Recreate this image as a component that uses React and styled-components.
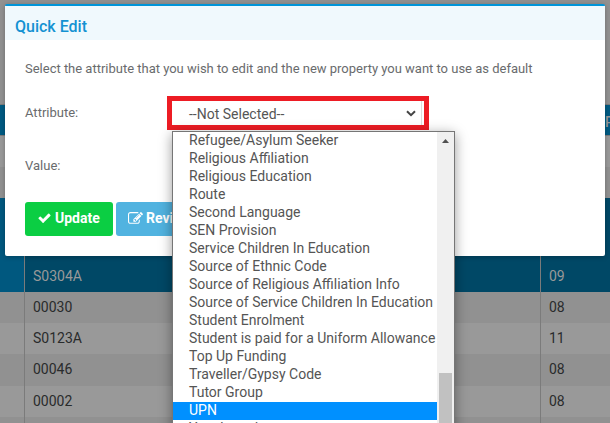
import React from "react";
import styled, { createGlobalStyle } from "styled-components";

const GlobalStyle = createGlobalStyle`
  * {
    box-sizing: border-box;
  }
  body {
    margin: 0;
    overflow: hidden;
    background: #919191;
    font-family: Roboto, "Liberation Sans", sans-serif;
  }
`;

const Page = styled.div`
  position: relative;
  width: 610px;
  height: 423px;
  overflow: hidden;
`;

const Table = styled.div`
  padding-top: 104px;
`;

const HeadRow = styled.div`
  height: 32px;
  display: flex;
  align-items: center;
  justify-content: flex-end;
  padding-top: 3px;
  background: #005a82;
  border-top: 1px solid #7b7b7b;
  border-bottom: 1px solid #7b7b7b;
  color: #999;
  font-size: 14px;
  font-weight: 500;
  span {
    width: 5px;
    white-space: nowrap;
  }
`;

const rowColors = {
  odd: "#999999",
  even: "#919191",
  selected: "#004866",
};

const Row = styled.div`
  display: grid;
  grid-template-columns: 25px 516px 1fr;
  height: ${(props) => props.$height}px;
  background: ${(props) => rowColors[props.$kind]};
  color: ${(props) => (props.$kind === "selected" ? "#999" : "#292b2c")};
  font-size: 14px;
`;

const Cell = styled.div`
  display: flex;
  align-items: center;
  padding: 0 0 2px 8px;
  background: ${(props) => (props.$sorted ? "#00587f" : "transparent")};
  border-right: ${(props) => (props.$last ? "0" : "1px solid #7b7b7b")};
`;

const Modal = styled.div`
  position: absolute;
  left: 5px;
  top: 4px;
  width: 600px;
  height: 252px;
  background: #fff;
  border-top: 2px solid #0095d9;
  border-radius: 2px;
  box-shadow: 0 1px 5px rgba(0, 0, 0, 0.25);
`;

const ModalHeader = styled.div`
  height: 34px;
  padding: 1px 10px 0;
  background: #f0f9fd;
  color: #1492d2;
  font-size: 16px;
  font-weight: 500;
  line-height: 40px;
`;

const ModalBody = styled.div`
  display: flex;
  flex-direction: column;
  padding: 19px 20px 0;
  color: #696b6d;
  font-size: 13px;
`;

const Text = styled.p`
  margin: 0 0 17px;
  line-height: 20px;
  letter-spacing: -0.01px;
  white-space: nowrap;
`;

const Field = styled.div`
  display: flex;
  align-items: flex-start;
  height: 53px;
`;

const Label = styled.label`
  width: 142px;
  padding-top: 7px;
  line-height: 20px;
`;

const Highlight = styled.div`
  width: 262px;
  height: 34px;
  border: 5px solid #ed1c24;
`;

const Select = styled.div`
  display: flex;
  align-items: center;
  justify-content: space-between;
  width: 250px;
  height: 24px;
  padding: 1px 5px 0 17px;
  border-right: 1px solid #ddd;
  color: #555;
  font-size: 14px;
`;

const Buttons = styled.div`
  display: flex;
  gap: 3px;
`;

const Button = styled.button`
  display: flex;
  align-items: center;
  gap: 3px;
  width: 88px;
  height: 34px;
  padding: 0 0 2px 12px;
  border: 0;
  border-radius: 3px;
  background: ${(props) => props.$color};
  color: #fff;
  font-family: inherit;
  font-size: 14px;
  font-weight: 700;
  svg {
    flex: none;
    fill: currentColor;
  }
`;

const Dropdown = styled.div`
  position: absolute;
  left: 172px;
  top: 131px;
  display: flex;
  width: 283px;
  height: 310px;
  background: #fff;
  border: 1px solid #767676;
  box-shadow: 0 3px 12px rgba(0, 0, 0, 0.4);
`;

const Options = styled.div`
  width: 264px;
`;

const Option = styled.div`
  height: 18px;
  padding-left: 16px;
  background: ${(props) => (props.$active ? "#0090ff" : "#fff")};
  color: ${(props) => (props.$active ? "#fff" : "#555")};
  font-size: 14px;
  line-height: 17px;
  white-space: nowrap;
`;

const Scrollbar = styled.div`
  width: 17px;
  padding: 7px 2px 0;
  background: #f0f0f0;
  svg {
    display: block;
    margin: 0 auto;
  }
`;

const Thumb = styled.div`
  height: 80px;
  margin-top: 230px;
  background: #c1c1c1;
`;

const options = [
  "Refugee/Asylum Seeker",
  "Religious Affiliation",
  "Religious Education",
  "Route",
  "Second Language",
  "SEN Provision",
  "Service Children In Education",
  "Source of Ethnic Code",
  "Source of Religious Affiliation Info",
  "Source of Service Children In Education",
  "Student Enrolment",
  "Student is paid for a Uniform Allowance",
  "Top Up Funding",
  "Traveller/Gypsy Code",
  "Tutor Group",
  "UPN",
  "Year based",
];

const rows = [
  { height: 31, kind: "odd" },
  { height: 31, kind: "even" },
  { height: 32, kind: "selected" },
  { height: 31, kind: "selected" },
  { height: 31, kind: "selected", code: "S0304A", year: "09" },
  { height: 31, kind: "even", code: "00030", year: "08" },
  { height: 31, kind: "odd", code: "S0123A", year: "11" },
  { height: 32, kind: "even", code: "00046", year: "08" },
  { height: 31, kind: "odd", code: "00002", year: "08" },
  { height: 31, kind: "even" },
];

const CheckIcon = () => (
  <svg width="15" height="14" viewBox="0 0 1792 1792">
    <path d="M1671 566q0 40-28 68l-724 724-136 136q-28 28-68 28t-68-28l-136-136-362-362q-28-28-28-68t28-68l136-136q28-28 68-28t68 28l294 295 656-657q28-28 68-28t68 28l136 136q28 28 28 68z" />
  </svg>
);

const EditIcon = () => (
  <svg width="15" height="15" viewBox="0 0 1792 1792">
    <path d="M888 1184l116-116-152-152-116 116v56h96v96h56zm440-720q-16-16-33 1l-350 350q-17 17-1 33t33-1l350-350q17-17 1-33zm80 594v190q0 119-84.5 203.5t-203.5 84.5h-832q-119 0-203.5-84.5t-84.5-203.5v-832q0-119 84.5-203.5t203.5-84.5h832q63 0 117 25 15 7 18 23 3 17-9 29l-49 49q-14 14-32 8-23-6-45-6h-832q-66 0-113 47t-47 113v832q0 66 47 113t113 47h832q66 0 113-47t47-113v-126q0-13 9-22l64-64q15-15 35-7t20 29zm-96-738l288 288-672 672h-288v-288zm444 132l-92 92-288-288 92-92q28-28 68-28t68 28l152 152q28 28 28 68t-28 68z" />
  </svg>
);

const App = () => {
  return (
    <>
      <GlobalStyle />
      <Page>
        <Table>
          <HeadRow>
            <span>P</span>
          </HeadRow>
          {rows.map((row, i) => (
            <Row key={i} $height={row.height} $kind={row.kind}>
              <Cell $sorted={row.kind === "selected"} />
              <Cell>{row.code}</Cell>
              <Cell $last>{row.year}</Cell>
            </Row>
          ))}
        </Table>

        <Modal>
          <ModalHeader>Quick Edit</ModalHeader>
          <ModalBody>
            <Text>
              Select the attribute that you wish to edit and the new property you want to use as default
            </Text>
            <Field>
              <Label>Attribute:</Label>
              <Highlight>
                <Select>
                  <span>--Not Selected--</span>
                  <svg width="10" height="7" viewBox="0 0 10 7">
                    <path d="M1 1.2l4 4 4-4" fill="none" stroke="#444" strokeWidth="2" />
                  </svg>
                </Select>
              </Highlight>
            </Field>
            <Field>
              <Label>Value:</Label>
            </Field>
            <Buttons>
              <Button $color="#0bce43">
                <CheckIcon />
                Update
              </Button>
              <Button $color="#51b3e0">
                <EditIcon />
                Review
              </Button>
            </Buttons>
          </ModalBody>
        </Modal>

        <Dropdown>
          <Options>
            {options.map((name) => (
              <Option key={name} $active={name === "UPN"}>
                {name}
              </Option>
            ))}
          </Options>
          <Scrollbar>
            <svg width="7" height="4" viewBox="0 0 7 4">
              <path d="M0 4L3.5 0L7 4z" fill="#505050" />
            </svg>
            <Thumb />
          </Scrollbar>
        </Dropdown>
      </Page>
    </>
  );
};

export default App;
